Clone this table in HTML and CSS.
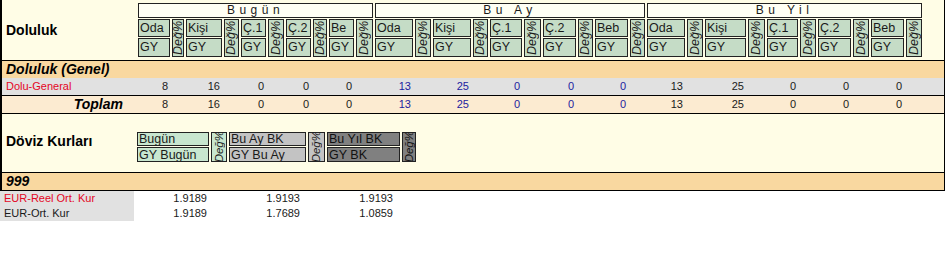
FILE: index.html
```html
<!DOCTYPE html>
<html lang="tr">
<head>
    <meta charset="UTF-8">
    <meta name="viewport" content="width=device-width, initial-scale=1.0">
    <title>Doluluk</title>
    <link rel="stylesheet" href="styles.css">
</head>
<body>
    <div class="sheet">
        <!-- column headers: one box pair per value, a tall Değ% box after each -->
        <div class="grid head">
            <div class="title">Doluluk</div>
            <div class="group">Bugün</div>
            <div class="group">Bu Ay</div>
            <div class="group">Bu Yil</div>

            <div class="pair"><span class="box">Oda</span><span class="box">GY</span></div>
            <div class="box deg"><span>Değ%</span></div>
            <div class="pair"><span class="box">Kişi</span><span class="box">GY</span></div>
            <div class="box deg"><span>Değ%</span></div>
            <div class="pair"><span class="box">Ç.1</span><span class="box">GY</span></div>
            <div class="box deg"><span>Değ%</span></div>
            <div class="pair"><span class="box">Ç.2</span><span class="box">GY</span></div>
            <div class="box deg"><span>Değ%</span></div>
            <div class="pair"><span class="box">Be</span><span class="box">GY</span></div>
            <div class="box deg"><span>Değ%</span></div>

            <div class="pair"><span class="box">Oda</span><span class="box">GY</span></div>
            <div class="box deg"><span>Değ%</span></div>
            <div class="pair"><span class="box">Kişi</span><span class="box">GY</span></div>
            <div class="box deg"><span>Değ%</span></div>
            <div class="pair"><span class="box">Ç.1</span><span class="box">GY</span></div>
            <div class="box deg"><span>Değ%</span></div>
            <div class="pair"><span class="box">Ç.2</span><span class="box">GY</span></div>
            <div class="box deg"><span>Değ%</span></div>
            <div class="pair"><span class="box">Beb</span><span class="box">GY</span></div>
            <div class="box deg"><span>Değ%</span></div>

            <div class="pair"><span class="box">Oda</span><span class="box">GY</span></div>
            <div class="box deg"><span>Değ%</span></div>
            <div class="pair"><span class="box">Kişi</span><span class="box">GY</span></div>
            <div class="box deg"><span>Değ%</span></div>
            <div class="pair"><span class="box">Ç.1</span><span class="box">GY</span></div>
            <div class="box deg"><span>Değ%</span></div>
            <div class="pair"><span class="box">Ç.2</span><span class="box">GY</span></div>
            <div class="box deg"><span>Değ%</span></div>
            <div class="pair"><span class="box">Beb</span><span class="box">GY</span></div>
            <div class="box deg"><span>Değ%</span></div>
        </div>

        <div class="band">Doluluk (Genel)</div>

        <div class="grid row dolu">
            <span class="lbl red">Dolu-General</span>
            <span>8</span><span></span><span>16</span><span></span><span>0</span><span></span><span>0</span><span></span><span>0</span><span></span>
            <span>13</span><span></span><span>25</span><span></span><span>0</span><span></span><span>0</span><span></span><span>0</span><span></span>
            <span>13</span><span></span><span>25</span><span></span><span>0</span><span></span><span>0</span><span></span><span>0</span><span></span>
        </div>

        <div class="grid row total">
            <span class="lbl">Toplam</span>
            <span>8</span><span></span><span>16</span><span></span><span>0</span><span></span><span>0</span><span></span><span>0</span><span></span>
            <span>13</span><span></span><span>25</span><span></span><span>0</span><span></span><span>0</span><span></span><span>0</span><span></span>
            <span>13</span><span></span><span>25</span><span></span><span>0</span><span></span><span>0</span><span></span><span>0</span><span></span>
        </div>

        <div class="doviz">
            <div class="title">Döviz Kurları</div>
            <div class="legend">
                <div class="pair green"><span class="box">Bugün</span><span class="box">GY Bugün</span></div>
                <div class="box deg green"><span>Değ%</span></div>
                <div class="pair silver"><span class="box">Bu Ay BK</span><span class="box">GY Bu Ay</span></div>
                <div class="box deg silver"><span>Değ%</span></div>
                <div class="pair dark"><span class="box">Bu Yıl BK</span><span class="box">GY BK</span></div>
                <div class="box deg dark"><span>Değ%</span></div>
            </div>
        </div>

        <div class="band last">999</div>
    </div>

    <div class="kur">
        <span class="lbl red">EUR-Reel Ort. Kur</span>
        <span>1.9189</span><span>1.9193</span><span>1.9193</span>
    </div>
    <div class="kur">
        <span class="lbl">EUR-Ort. Kur</span>
        <span>1.9189</span><span>1.7689</span><span>1.0859</span>
    </div>
</body>
</html>
```

FILE: styles.css
```css
* {
    box-sizing: border-box;
}

body {
    margin: 0;
    font-family: "Liberation Sans", Arial, sans-serif;
    color: #1a1a1a;
    background: #fff;
}

.sheet {
    width: 945px;
    background: #fffde6;
    border-left: 2px solid #000;
    border-right: 1px solid #000;
    --cols: 136px
        34px 14px 38px 17px 27px 18px 27px 16px 27px 19px
        40px 18px 40px 17px 34px 19px 35px 17px 35px 17px
        40px 18px 43px 19px 33px 18px 35px 18px 35px 18px
        1fr;
}

.grid {
    display: grid;
    grid-template-columns: var(--cols);
}

.title {
    padding-left: 4px;
    font-size: 14px;
    font-weight: bold;
    color: #000;
}

/* header */
.head {
    grid-template-rows: 19px 41px;
}

.head .title {
    grid-row: 1 / 3;
    grid-column: 1;
    align-self: center;
}

.group {
    grid-row: 1;
    grid-column: span 10;
    height: 15px;
    margin: 3px 2px 0 0;
    background: #fffff4;
    border: 1px solid #222;
    font-size: 12px;
    line-height: 13px;
    letter-spacing: 4.5px;
    text-align: center;
}

.box {
    display: block;
    border: 1px solid #222;
    background: #c5dcc6;
    font-size: 12.5px;
    padding-left: 1px;
    white-space: nowrap;
    overflow: hidden;
}

.pair {
    grid-row: 2;
    display: flex;
    flex-direction: column;
    gap: 1px;
    margin-right: 2px;
}

.pair .box {
    height: 18px;
    line-height: 16px;
}

.pair .box + .box {
    height: 19px;
    line-height: 17px;
}

.deg {
    grid-row: 2;
    height: 38px;
    margin-right: 2px;
    padding: 0;
    display: flex;
    align-items: center;
    justify-content: center;
}

.deg span {
    writing-mode: vertical-rl;
    transform: rotate(180deg);
    font-size: 12.5px;
    font-style: italic;
    line-height: 13px;
}

/* section bands */
.band {
    height: 18px;
    border-top: 1px solid #000;
    background: #f9d8a0;
    padding-left: 4px;
    font-size: 14px;
    line-height: 17px;
    font-weight: bold;
    font-style: italic;
    color: #000;
}

.band.last {
    height: 19px;
    border-bottom: 1px solid #000;
}

/* data rows */
.row {
    height: 17px;
    font-size: 11px;
    line-height: 17px;
}

.row span {
    text-align: right;
    padding-right: 4px;
}

.row span:nth-child(n+12):nth-child(-n+21) {
    color: #1c1ca0;
}

.row .lbl {
    text-align: left;
    padding-left: 4px;
}

.red {
    color: #e4061f;
}

.dolu {
    background: #e1e1e1;
}

.total {
    height: 19px;
    background: #fcebd1;
    border-top: 1px solid #000;
    border-bottom: 1px solid #000;
}

.total .lbl {
    text-align: right;
    padding-right: 15px;
    font-size: 14px;
    font-weight: bold;
    font-style: italic;
    color: #000;
}

/* exchange rate legend */
.doviz {
    height: 58px;
    display: flex;
    align-items: flex-start;
    padding-top: 18px;
}

.doviz .title {
    width: 135px;
    margin-top: 1px;
    line-height: 16px;
}

.legend {
    display: grid;
    grid-template-columns: 74px 18px 79px 19px 75px 16px;
}

.legend .pair,
.legend .deg {
    grid-row: auto;
}

.legend .pair .box {
    height: 14px;
    line-height: 13px;
}

.legend .pair .box + .box {
    height: 15px;
    line-height: 14px;
}

.legend .deg {
    height: 30px;
}

.legend .deg span {
    font-size: 11.5px;
}

.green .box,
.deg.green {
    background: #c8e6cf;
}

.silver .box,
.deg.silver {
    background: #c3c3c3;
}

.dark .box,
.deg.dark {
    background: #808080;
    color: #111;
}

/* currency rows below the sheet */
.kur {
    display: grid;
    grid-template-columns: 134px 76px 93px 93px;
    height: 15px;
    font-size: 11px;
    line-height: 15px;
}

.kur span {
    text-align: right;
    padding-right: 3px;
}

.kur .lbl {
    text-align: left;
    padding-left: 4px;
    background: #e1e1e1;
}
```
